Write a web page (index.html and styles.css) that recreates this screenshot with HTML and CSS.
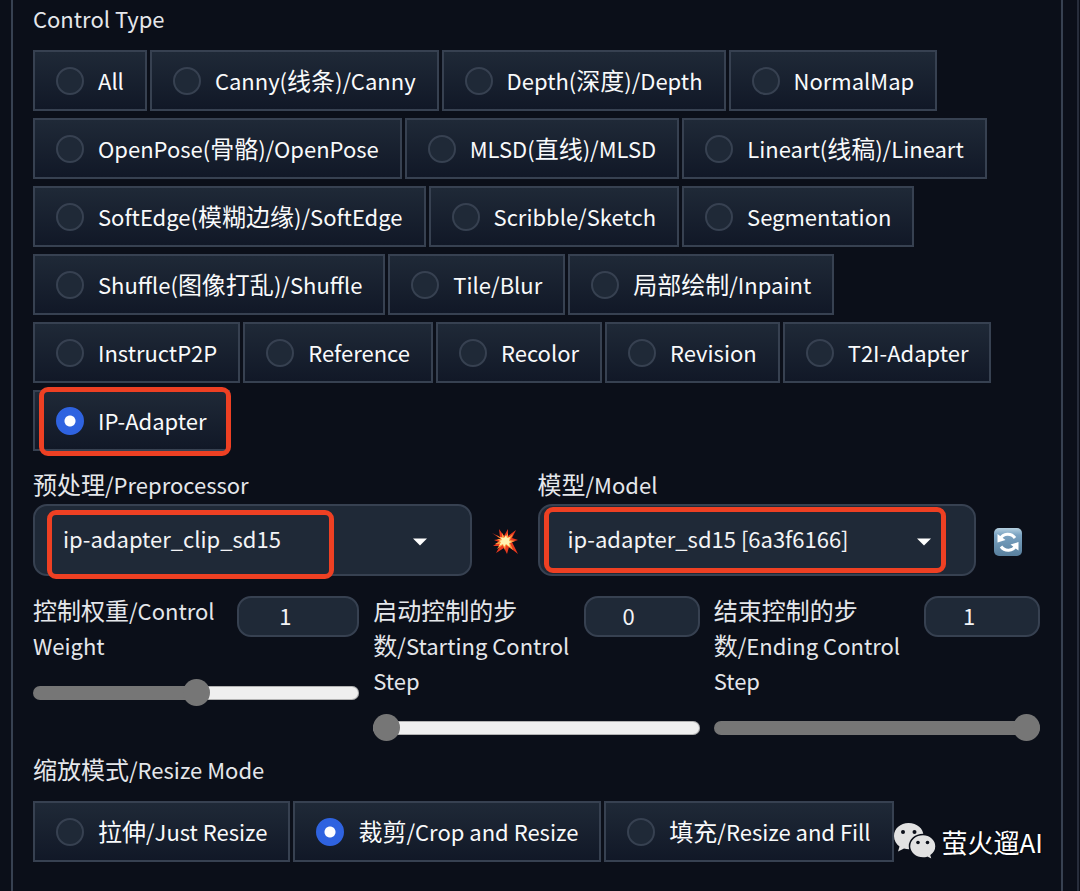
FILE: index.html
```html
<!DOCTYPE html>
<html lang="en">
	<head>
		<title>ControlNet</title>
		<meta charset="utf-8" />
		<link rel="stylesheet" href="styles.css">
	</head>
<body>
<div class="outer">
	<div class="panel">
		<fieldset class="group">
			<legend>Control Type</legend>
			<div class="options">
				<label class="option"><input type="radio" name="type">All</label>
				<label class="option"><input type="radio" name="type"><span>Canny(<span lang="zh">线条</span>)/Canny</span></label>
				<label class="option"><input type="radio" name="type"><span>Depth(<span lang="zh">深度</span>)/Depth</span></label>
				<label class="option"><input type="radio" name="type">NormalMap</label>
				<label class="option"><input type="radio" name="type"><span>OpenPose(<span lang="zh">骨骼</span>)/OpenPose</span></label>
				<label class="option"><input type="radio" name="type"><span>MLSD(<span lang="zh">直线</span>)/MLSD</span></label>
				<label class="option"><input type="radio" name="type"><span>Lineart(<span lang="zh">线稿</span>)/Lineart</span></label>
				<label class="option"><input type="radio" name="type"><span>SoftEdge(<span lang="zh">模糊边缘</span>)/SoftEdge</span></label>
				<label class="option"><input type="radio" name="type">Scribble/Sketch</label>
				<label class="option"><input type="radio" name="type">Segmentation</label>
				<label class="option"><input type="radio" name="type"><span>Shuffle(<span lang="zh">图像打乱</span>)/Shuffle</span></label>
				<label class="option"><input type="radio" name="type">Tile/Blur</label>
				<label class="option"><input type="radio" name="type"><span><span lang="zh">局部绘制</span>/Inpaint</span></label>
				<label class="option"><input type="radio" name="type">InstructP2P</label>
				<label class="option"><input type="radio" name="type">Reference</label>
				<label class="option"><input type="radio" name="type">Recolor</label>
				<label class="option"><input type="radio" name="type">Revision</label>
				<label class="option"><input type="radio" name="type">T2I-Adapter</label>
				<label class="option"><input type="radio" name="type" checked>IP-Adapter<span class="mark mark-type"></span></label>
			</div>
		</fieldset>

		<div class="models">
			<div class="field">
				<label for="preprocessor"><span lang="zh">预处理</span>/Preprocessor</label>
				<div class="select">
					<select id="preprocessor"><option>ip-adapter_clip_sd15</option></select>
					<svg class="caret" viewBox="0 0 14 8"><path d="M0 0.5h14L7 7.5z" fill="#fff"/></svg>
					<span class="mark mark-pre"></span>
				</div>
			</div>
			<button class="tool" aria-label="Run preprocessor">
				<svg width="28" height="28" viewBox="0 0 28 28">
					<path d="M14 14L1 5l8 4L8 1l5 7 4-7 0 7 8-6-4 8 6 2-6 2 6 12-9-7-2 7-3-6-8 5 4-7-7 0 6-4-5-2 6-1z" fill="#e8391f"/>
					<path d="M5 7l6 3 0-5 3 5 3-5 0 5 5-4-3 6 5 1-5 2 3 7-7-5-1 5-2-5-6 4 3-5-5 0 5-3-3-2 4 0z" fill="#ff9a3c"/>
					<path d="M9 9l4 1 2-3 1 3 3-1-1 4 3 1-3 1 1 4-4-3-2 3-1-3-4 2 2-4-2-1 3-1z" fill="#fff3b0"/>
				</svg>
			</button>
			<div class="field">
				<label for="model"><span lang="zh">模型</span>/Model</label>
				<div class="select">
					<select id="model"><option>ip-adapter_sd15 [6a3f6166]</option></select>
					<svg class="caret" viewBox="0 0 14 8"><path d="M0 0.5h14L7 7.5z" fill="#fff"/></svg>
					<span class="mark mark-model"></span>
				</div>
			</div>
			<button class="tool" aria-label="Refresh models">
				<svg width="28" height="28" viewBox="0 0 28 28">
					<defs>
						<linearGradient id="blue" x1="0" y1="0" x2="0" y2="1">
							<stop offset="0" stop-color="#b5d0e0"/>
							<stop offset="0.25" stop-color="#7ba3c2"/>
							<stop offset="1" stop-color="#587f9d"/>
						</linearGradient>
					</defs>
					<rect width="28" height="28" rx="5" fill="url(#blue)"/>
					<path d="M6.500 10.500C9 5.500 17 4.500 21 10M21.500 18C19 23 11 24 7 18.500" fill="none" stroke="#fff" stroke-width="3"/>
					<path d="M3.500 6v8.500l8-2.500zM24.500 22.500V14l-8 2.500z" fill="#fff"/>
				</svg>
			</button>
		</div>

		<div class="sliders">
			<div class="slider">
				<div class="slider-head">
					<label for="weight"><span lang="zh">控制权重</span>/Control Weight</label>
					<input type="number" class="wide" aria-label="Control Weight" value="1">
				</div>
				<input type="range" id="weight" min="0" max="2" step="0.05" value="1" style="--fill: 50%">
			</div>
			<div class="slider">
				<div class="slider-head">
					<label for="start"><span lang="zh">启动控制的步数</span>/Starting Control Step</label>
					<input type="number" aria-label="Starting Control Step" value="0">
				</div>
				<input type="range" id="start" min="0" max="1" step="0.01" value="0" style="--fill: 0%">
			</div>
			<div class="slider">
				<div class="slider-head">
					<label for="end"><span lang="zh">结束控制的步数</span>/Ending Control Step</label>
					<input type="number" aria-label="Ending Control Step" value="1">
				</div>
				<input type="range" id="end" min="0" max="1" step="0.01" value="1" style="--fill: 100%">
			</div>
		</div>

		<fieldset class="group">
			<legend><span lang="zh">缩放模式</span>/Resize Mode</legend>
			<div class="options">
				<label class="option"><input type="radio" name="resize"><span><span lang="zh">拉伸</span>/Just Resize</span></label>
				<label class="option"><input type="radio" name="resize" checked><span><span lang="zh">裁剪</span>/Crop and Resize</span></label>
				<label class="option"><input type="radio" name="resize"><span><span lang="zh">填充</span>/Resize and Fill</span></label>
			</div>
		</fieldset>

		<div class="watermark">
			<svg width="42" height="38" viewBox="0 0 42 38">
				<path d="M14.500 1C6.500 1 0 6.500 0 14c0 4.500 2.200 8 5.500 10.500L4 29.500l6-3a17 17 0 0 0 5 .8C23 27.300 29.500 21.500 29.500 14S23 1 14.500 1z" fill="#e2e2e2"/>
				<path d="M29 12.500c-7.500 0-13.500 5.200-13.500 11.800S21.500 36 29 36c1.500 0 3-.2 4.300-.6l5.200 2.600-1.400-4.600c3-2.200 4.900-5.400 4.900-9.100 0-6.600-6-11.800-13-11.800z" fill="#e2e2e2" stroke="#0b0f19" stroke-width="1.500"/>
				<circle cx="9" cy="10" r="2" fill="#0b0f19"/>
				<circle cx="20.500" cy="10" r="2" fill="#0b0f19"/>
				<circle cx="24" cy="20.500" r="1.800" fill="#0b0f19"/>
				<circle cx="33.500" cy="20.500" r="1.800" fill="#0b0f19"/>
			</svg>
			<span>萤火遛AI</span>
		</div>
	</div>
</div>
</body>
</html>
```

FILE: styles.css
```css
:root {
	--bg: #0b0f19;
	--fill-bg: #1f2937;
	--line: #374151;
	--red: #ee4023;
	background-color: var(--bg);
}
* {
	box-sizing: border-box;
}
body {
	margin: 0;
	color: #e5e7eb;
	font-family: "Noto Sans CJK SC", sans-serif;
	font-size: 22px;
	line-height: 35px;
}
[lang="zh"] {
	font-size: 24px;
	line-height: 24px;
}
input, select, button {
	font: inherit;
	color: #f3f4f6;
	margin: 0;
}
.outer {
	min-height: 100vh;
	margin-right: 1px;
	border-right: 2px solid #272d3b;
	display: flex;
}
.panel {
	position: relative;
	flex: 1;
	margin: 0 14px 0 11px;
	padding: 1px 21px 28px 20px;
	border: solid var(--line);
	border-width: 0 2px;
}

/* radio groups */
.group {
	border: 0;
	margin: 0;
	padding: 0;
}
.group legend {
	padding: 0;
	margin-bottom: 14px;
	height: 35px;
}
.options {
	display: flex;
	flex-wrap: wrap;
	gap: 7px 3px;
}
.option {
	position: relative;
	display: flex;
	align-items: center;
	gap: 14px;
	height: 61px;
	padding: 0 21px;
	border: 2px solid var(--line);
	background: linear-gradient(#1f2937, #111827);
	color: #f9fafb;
	white-space: nowrap;
}
.option input {
	appearance: none;
	width: 28px;
	height: 28px;
	border: 2px solid var(--line);
	border-radius: 50%;
	background: #1f2937;
}
.option input:checked {
	border-color: #2f63e0;
	background: radial-gradient(circle, #fff 5px, #2f63e0 6px);
}

/* red boxes drawn over the controls */
.mark {
	position: absolute;
	border: 5px solid var(--red);
	border-radius: 9px;
	pointer-events: none;
}
.mark-type {
	inset: -5px -3px -7px 4px;
}
.mark-pre {
	inset: 6px 138px -3px 14px;
}
.mark-model {
	inset: 3px 30px 3px 6px;
}

/* preprocessor and model */
.models {
	display: grid;
	grid-template-columns: 1fr 66px 1fr 64px;
	margin-top: 16px;
}
.field label {
	display: block;
	height: 37px;
}
.select {
	position: relative;
}
.select select {
	appearance: none;
	display: block;
	width: 100%;
	height: 72px;
	padding: 0 60px 4px 28px;
	border: 2px solid var(--line);
	border-radius: 14px;
	background: var(--fill-bg);
}
.caret {
	position: absolute;
	top: 34px;
	right: 45px;
	width: 14px;
	height: 8px;
}
.tool {
	align-self: end;
	display: flex;
	align-items: center;
	justify-content: center;
	height: 72px;
	padding: 4px 0 0;
	border: 0;
	background: none;
}

/* sliders */
.sliders {
	display: grid;
	grid-template-columns: repeat(3, 1fr);
	align-items: start;
	gap: 14px;
	margin: 17px 0 11px;
}
.slider-head {
	display: flex;
	align-items: flex-start;
	justify-content: space-between;
	gap: 14px;
}
.slider input[type="number"] {
	appearance: textfield;
	flex: none;
	width: 116px;
	height: 41px;
	margin-top: 3px;
	padding: 0 26px 4px 0;
	border: 2px solid var(--line);
	border-radius: 14px;
	background: var(--fill-bg);
	text-align: center;
}
.slider input.wide {
	width: 122px;
}
input[type="number"]::-webkit-inner-spin-button {
	display: none;
}
.slider input[type="range"] {
	appearance: none;
	display: block;
	width: 100%;
	height: 27px;
	margin-top: 16px;
	background: none;
}
.slider input::-webkit-slider-runnable-track {
	height: 14px;
	border-radius: 7px;
	background: linear-gradient(#767676, #767676) 0 0 / var(--fill) 100% no-repeat, #efefef;
	box-shadow: inset 0 0 0 1px rgba(118, 118, 118, 0.5);
}
.slider input::-webkit-slider-thumb {
	appearance: none;
	width: 27px;
	height: 27px;
	margin-top: -7px;
	border-radius: 50%;
	background: #767676;
}

.watermark {
	position: absolute;
	right: 18px;
	bottom: 31px;
	display: flex;
	align-items: center;
	gap: 6px;
	color: #fff;
	font-size: 26px;
	text-shadow: 0 0 2px #000;
}
```
